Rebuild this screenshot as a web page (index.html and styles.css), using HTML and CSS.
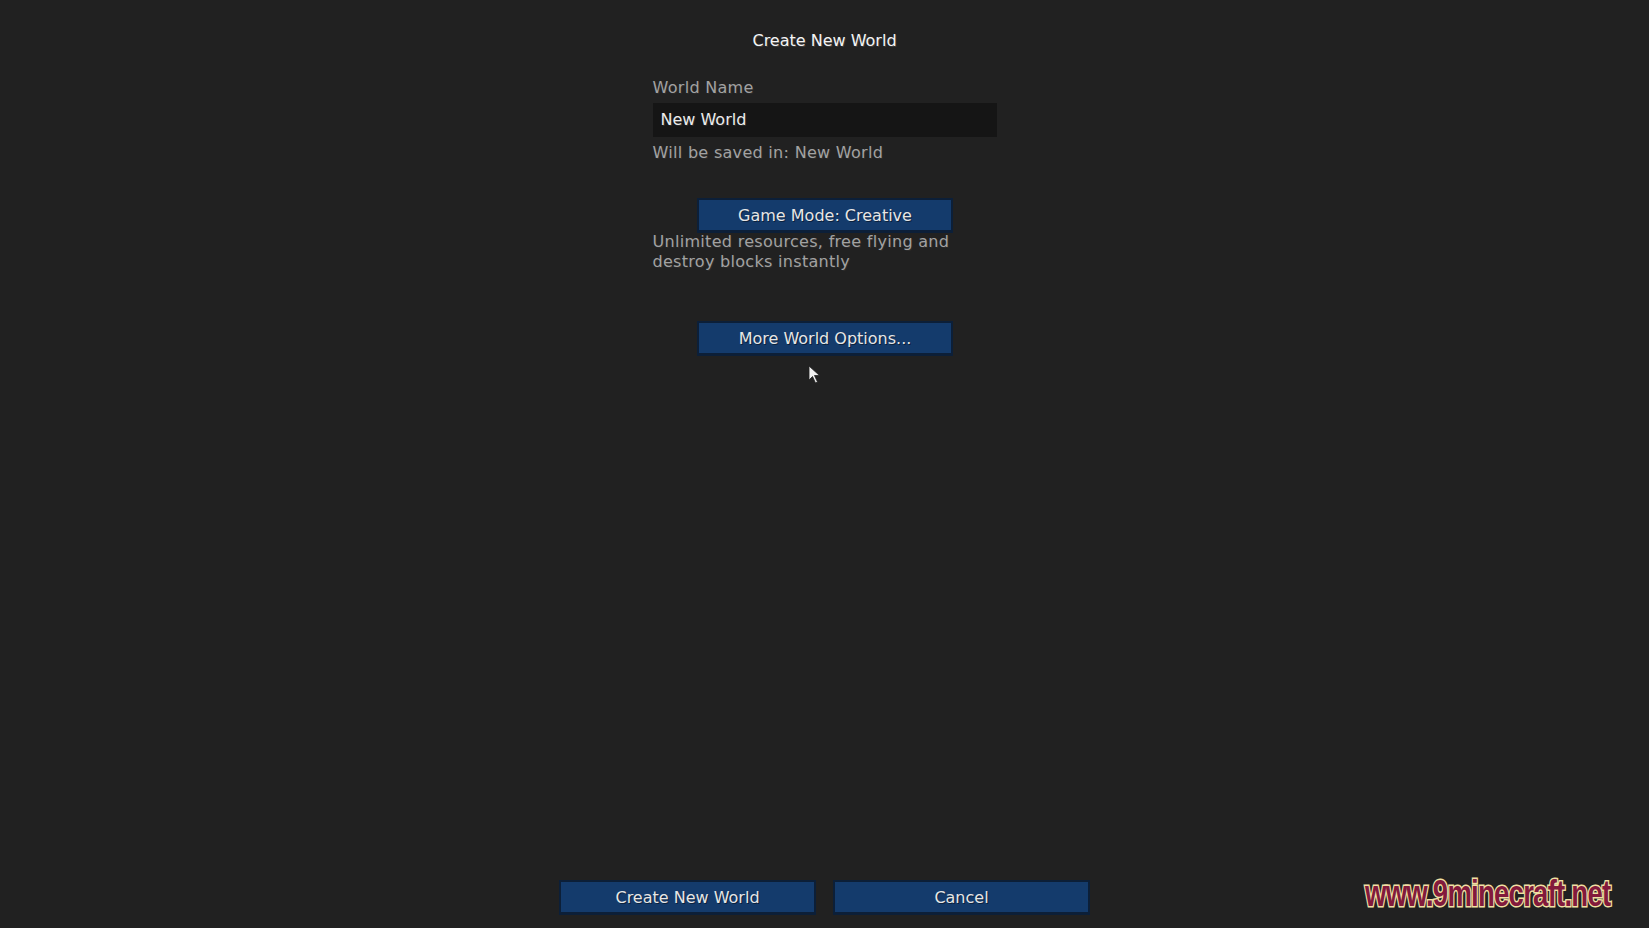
FILE: index.html
```html
<!DOCTYPE html>
<html lang="en">
<head>
<meta charset="UTF-8">
<meta name="viewport" content="width=device-width, initial-scale=1.0">
<title>Create New World</title>
<link rel="stylesheet" href="styles.css">
</head>
<body>
<div class="screen">
    <div class="main">
        <h1 class="title">Create New World</h1>
        <div class="form">
            <p class="label">World Name</p>
            <div class="name-box">New World</div>
            <p class="hint">Will be saved in: New World</p>

            <button class="mc-button mode-button">Game Mode: Creative</button>
            <p class="hint desc">Unlimited resources, free flying and<br>destroy blocks instantly</p>

            <button class="mc-button options-button">More World Options...</button>
        </div>
    </div>
    <div class="footer">
        <button class="mc-button wide">Create New World</button>
        <button class="mc-button wide">Cancel</button>
    </div>
</div>

<svg class="cursor" width="14" height="20" viewBox="0 0 14 20">
    <path d="M1 1 L1 15 L4.5 11.5 L7.5 18 L9.5 17 L6.5 10.5 L11.5 10.5 Z" fill="#f2f2f2" stroke="#222" stroke-width="0.8"/>
</svg>

<div class="watermark">www.9minecraft.net</div>
</body>
</html>
```

FILE: styles.css
```css
body, html {
    height: 100%;
    margin: 0;
    background: #212121;
    font-family: "DejaVu Sans", sans-serif;
    font-size: 16px;
    line-height: 21px;
}
.screen {
    height: 100%;
    display: flex;
    flex-direction: column;
}
.main {
    flex: 1;
    display: flex;
    flex-direction: column;
    align-items: center;
    padding-top: 30px;
}
.title {
    margin: 0;
    font-size: 16px;
    font-weight: normal;
    line-height: 21px;
    color: #f4f4f4;
    text-shadow: 1px 1px 0 #3a3a3a;
}
.form {
    width: 344px;
    margin-top: 26px;
    display: flex;
    flex-direction: column;
}
.label, .hint {
    margin: 0;
    color: #a2a2a2;
    letter-spacing: 0.3px;
    text-shadow: 1px 1px 0 #2b2b2b;
}
.name-box {
    margin-top: 5px;
    height: 34px;
    line-height: 34px;
    padding-left: 8px;
    background: #151515;
    color: #ececec;
    text-shadow: 1px 1px 0 #2a2a2a;
}
.name-box + .hint {
    margin-top: 5px;
}
.mc-button {
    display: block;
    height: 35px;
    padding: 0;
    font-family: "DejaVu Sans", sans-serif;
    font-size: 16px;
    color: #e6e6e6;
    background: #143b6c;
    border: 2px solid #0c1f38;
    border-bottom-width: 3px;
    text-shadow: 1px 1px 0 #0b213d;
    box-sizing: border-box;
}
.mode-button, .options-button {
    width: 256px;
    align-self: center;
    margin-left: 1px;
}
.mode-button {
    margin-top: 35px;
}
.desc {
    margin-top: -1px;
    line-height: 20px;
}
.options-button {
    margin-top: 49px;
}
.footer {
    display: flex;
    justify-content: center;
    gap: 17px;
    padding: 0 0 13px 0;
}
.wide {
    width: 257px;
}
.cursor {
    position: absolute;
    left: 808px;
    top: 365px;
}
.watermark {
    position: absolute;
    left: 1365px;
    top: 874px;
    font-family: "Liberation Sans Narrow", "Liberation Sans", sans-serif;
    font-weight: bold;
    font-size: 36px;
    line-height: 40px;
    letter-spacing: -1px;
    color: #821a3c;
    -webkit-text-stroke: 3px #f1e0a4;
    paint-order: stroke fill;
    transform-origin: left top;
    transform: scaleX(0.765);
}
```
